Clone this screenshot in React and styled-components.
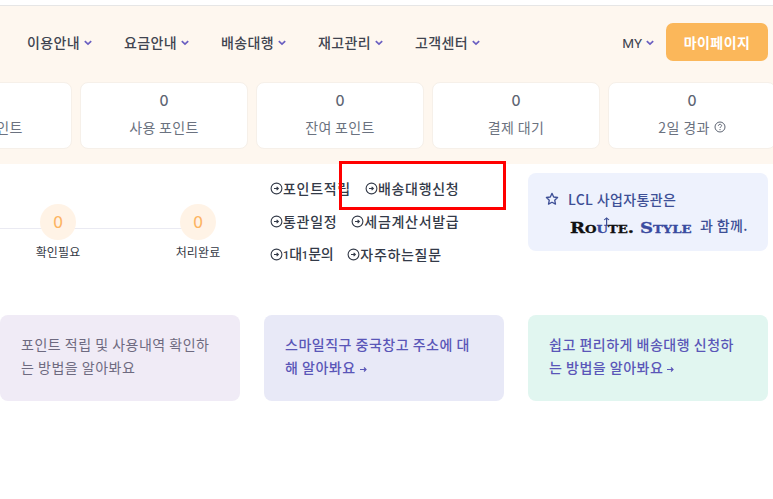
import styled, { createGlobalStyle } from "styled-components";

const GlobalStyle = createGlobalStyle`
  html, body {
    margin: 0;
    padding: 0;
    background: #fff;
    overflow: hidden;
  }
  body {
    font-family: "Noto Sans CJK KR", "Noto Sans", sans-serif;
  }
`;

const Page = styled.div`
  position: relative;
  width: 773px;
  height: 499px;
  overflow: hidden;
  padding-top: 5px;
  box-sizing: border-box;
`;

const Band = styled.header`
  height: 159px;
  box-sizing: border-box;
  border-top: 1px solid #e6e6e6;
  background: #fef7ef;
`;

const NavBar = styled.nav`
  display: flex;
  align-items: center;
  height: 76px;
  box-sizing: border-box;
  padding: 0 5px 0 27px;
`;

const NavItem = styled.span`
  display: flex;
  align-items: center;
  gap: 4px;
  width: 97px;
  height: 72px;
  margin-bottom: 4px;
  font-size: 14px;
  letter-spacing: 0.35px;
  font-weight: 500;
  color: #40444f;
`;

const MyMenu = styled(NavItem)`
  width: auto;
  margin-left: auto;
  margin-right: 12px;
  padding-top: 1px;
  font-family: "Roboto", sans-serif;
  font-size: 13.5px;
  font-weight: 400;
  letter-spacing: 0;
`;

const MyButton = styled.button`
  width: 102px;
  height: 38px;
  margin-bottom: 4px;
  border: 0;
  border-radius: 7px;
  background: #fbb75a;
  color: #fff;
  font: 700 14px "Noto Sans CJK KR", sans-serif;
  letter-spacing: 0.4px;
`;

const StatRow = styled.div`
  display: flex;
  gap: 8px;
  margin-left: -96px;
`;

const StatCard = styled.div`
  flex: none;
  width: 168px;
  height: 67px;
  box-sizing: border-box;
  padding-top: 8px;
  border: 1px solid #f6f0e9;
  border-radius: 8px;
  background: #fff;
  text-align: center;
  color: #6b7280;
`;

const StatValue = styled.div`
  font: 500 14px/20px "Inter", sans-serif;
  color: #5d6472;
`;

const StatLabel = styled.div`
  margin-top: 6px;
  display: flex;
  align-items: center;
  justify-content: center;
  gap: 4px;
  font-size: 14px;
  letter-spacing: 0.35px;
  line-height: 20px;
`;

const Middle = styled.section`
  display: flex;
  height: 151px;
`;

const Steps = styled.div`
  position: relative;
  display: flex;
  width: 270px;
  height: 100%;
`;

const StepLine = styled.div`
  position: absolute;
  left: 0;
  top: 64px;
  width: 198px;
  height: 1px;
  background: #eaeaf2;
`;

const Step = styled.div`
  position: relative;
  display: flex;
  flex-direction: column;
  align-items: center;
  width: 80px;
  margin-left: ${(p) => p.$offset}px;
  padding-top: 40px;
`;

const StepCircle = styled.div`
  display: flex;
  align-items: center;
  justify-content: center;
  width: 36px;
  height: 36px;
  border-radius: 50%;
  background: #fff3e6;
  color: #fdb462;
  font: 400 16px "DejaVu Sans", sans-serif;
`;

const StepLabel = styled.div`
  margin-top: 4px;
  font-size: 12px;
  letter-spacing: 0.1px;
  line-height: 16px;
  color: #343a46;
`;

const Links = styled.div`
  display: flex;
  flex-direction: column;
  gap: 13px;
  width: 258px;
  padding-top: 14px;
`;

const LinkRow = styled.div`
  display: flex;
  height: 20px;
  gap: 14px;
`;

const LinkItem = styled.a`
  display: flex;
  align-items: center;
  font-size: 14px;
  letter-spacing: 0.7px;
  font-weight: 500;
  line-height: 20px;
  color: #333a48;
`;

const TightLabel = styled.span`
  letter-spacing: -0.3px;
`;

const Digit = styled.span`
  font-family: "Liberation Sans Narrow", "Roboto", sans-serif;
  font-size: 11px;
  letter-spacing: 0;
`;

const Promo = styled.div`
  width: 240px;
  height: 78px;
  margin-top: 9px;
  box-sizing: border-box;
  padding: 14px 0 0 17px;
  border-radius: 8px;
  background: #eef2fd;
  color: #3d4f96;
  font-size: 14px;
  letter-spacing: 0.35px;
  font-weight: 500;
`;

const PromoLine = styled.div`
  display: flex;
  align-items: center;
  gap: 9px;
  height: 24px;
`;

const LogoLine = styled.div`
  display: flex;
  align-items: center;
  height: 28px;
  margin-left: 25px;
`;

const Logo = styled.span`
  position: relative;
  display: inline-block;
  flex: none;
  width: ${(p) => p.$width}px;
  margin-top: 6px;
  font: 700 15px/16px "DejaVu Serif", serif;
  font-variant: small-caps;
  letter-spacing: 0;
  -webkit-text-stroke: 0.3px currentColor;
  transform: scaleX(1.2);
  transform-origin: left center;
  color: ${(p) => p.$color};
`;

const LogoAccent = styled.span`
  color: #3a4ba0;
`;

const LogoArrow = styled.svg`
  position: absolute;
  left: 27px;
  top: -3px;
`;

const Guides = styled.section`
  display: flex;
  gap: 24px;
`;

const GuideCard = styled.div`
  width: 240px;
  height: 86px;
  box-sizing: border-box;
  padding: 18px 26px 0 21px;
  border-radius: 8px;
  background: ${(p) => p.$bg};
  color: ${(p) => p.$color};
  font-size: 14px;
  letter-spacing: 0.5px;
  font-weight: ${(p) => p.$weight};
  line-height: 23px;
`;

const Callout = styled.div`
  position: absolute;
  left: 339px;
  top: 161px;
  width: 167px;
  height: 49px;
  box-sizing: border-box;
  border: 3px solid #f00;
`;

const Chevron = () => (
  <svg width="8" height="9" viewBox="0 0 8 9" fill="none">
    <path d="M.8 3.2 4 6.2l3.2-3" stroke="#6a5fc1" strokeWidth="1.7" />
  </svg>
);

const CircleArrow = () => (
  <svg width="13" height="13" viewBox="0 0 13 13" fill="none">
    <circle cx="6.5" cy="6.5" r="5.4" stroke="#333a48" strokeWidth="1.1" />
    <path d="M4 6.5h4.2M6.6 4.9l1.7 1.6-1.7 1.6" stroke="#333a48" strokeWidth="1.1" />
  </svg>
);

const HelpIcon = () => (
  <svg width="12" height="12" viewBox="0 0 12 12" fill="none">
    <circle cx="6" cy="6" r="5" stroke="#5d6472" />
    <path d="M4.4 4.8c0-2 3.2-2 3.2-.1 0 1.1-1.6 1.1-1.6 2.3" stroke="#5d6472" />
    <circle cx="6" cy="8.6" r=".7" fill="#5d6472" />
  </svg>
);

const Star = () => (
  <svg width="14" height="14" viewBox="0 0 14 14" fill="none">
    <path
      d="M7 1.4 8.7 5l3.9.5-2.9 2.7.8 3.9L7 10.2l-3.5 1.9.8-3.9-2.9-2.7L5.3 5z"
      stroke="#3d4f96"
      strokeWidth="1.3"
      strokeLinejoin="round"
    />
  </svg>
);

const ArrowIcon = styled.svg`
  margin-left: 3px;
  vertical-align: -1px;
`;

const SmallArrow = ({ color }) => (
  <ArrowIcon width="9" height="9" viewBox="0 0 9 9" fill="none">
    <path d="M1 4.5h6M5 2.5l2 2-2 2" stroke={color} strokeWidth="1.2" />
  </ArrowIcon>
);

const navItems = ["이용안내", "요금안내", "배송대행", "재고관리", "고객센터"];
const stats = ["적립 포인트", "사용 포인트", "잔여 포인트", "결제 대기", "2일 경과"];
const linkRows = [
  [<span key="a">포인트적립</span>, <span key="b">배송대행신청</span>],
  [<span key="a">통관일정</span>, <span key="b">세금계산서발급</span>],
  [
    <TightLabel key="a">
      <Digit>1</Digit>대<Digit>1</Digit>문의
    </TightLabel>,
    <span key="b">자주하는질문</span>,
  ],
];

export default function App() {
  return (
    <Page>
      <GlobalStyle />
      <Band>
        <NavBar>
          {navItems.map((item) => (
            <NavItem key={item}>
              {item}
              <Chevron />
            </NavItem>
          ))}
          <MyMenu>
            MY
            <Chevron />
          </MyMenu>
          <MyButton>마이페이지</MyButton>
        </NavBar>
        <StatRow>
          {stats.map((label) => (
            <StatCard key={label}>
              <StatValue>0</StatValue>
              <StatLabel>
                {label}
                {label === "2일 경과" && <HelpIcon />}
              </StatLabel>
            </StatCard>
          ))}
        </StatRow>
      </Band>
      <Middle>
        <Steps>
          <StepLine />
          <Step $offset={18}>
            <StepCircle>0</StepCircle>
            <StepLabel>확인필요</StepLabel>
          </Step>
          <Step $offset={60}>
            <StepCircle>0</StepCircle>
            <StepLabel>처리완료</StepLabel>
          </Step>
        </Steps>
        <Links>
          {linkRows.map((row, i) => (
            <LinkRow key={i}>
              {row.map((label, j) => (
                <LinkItem key={j}>
                  <CircleArrow />
                  {label}
                </LinkItem>
              ))}
            </LinkRow>
          ))}
        </Links>
        <Promo>
          <PromoLine>
            <Star />
            LCL 사업자통관은
          </PromoLine>
          <LogoLine>
            <Logo $color="#111" $width={70}>
              Ro<LogoAccent>u</LogoAccent>te.
              <LogoArrow width="7" height="9" viewBox="0 0 7 9" fill="none">
                <path d="M3.5 9V1M1.5 3l2-2 2 2" stroke="#3d4f96" strokeWidth="1" />
              </LogoArrow>
            </Logo>
            <Logo $color="#3a4ba0" $width={60}>Style</Logo>
            과 함께.
          </LogoLine>
        </Promo>
      </Middle>
      <Guides>
        <GuideCard $bg="#f0ebf6" $color="#6e6a80" $weight={400}>
          포인트 적립 및 사용내역 확인하는 방법을 알아봐요
        </GuideCard>
        <GuideCard $bg="#e8e9f7" $color="#5a56b8" $weight={500}>
          스마일직구 중국창고 주소에 대해 알아봐요
          <SmallArrow color="#5a56b8" />
        </GuideCard>
        <GuideCard $bg="#e1f6f0" $color="#5a56b8" $weight={500}>
          쉽고 편리하게 배송대행 신청하는 방법을 알아봐요
          <SmallArrow color="#5a56b8" />
        </GuideCard>
      </Guides>
      <Callout />
    </Page>
  );
}
